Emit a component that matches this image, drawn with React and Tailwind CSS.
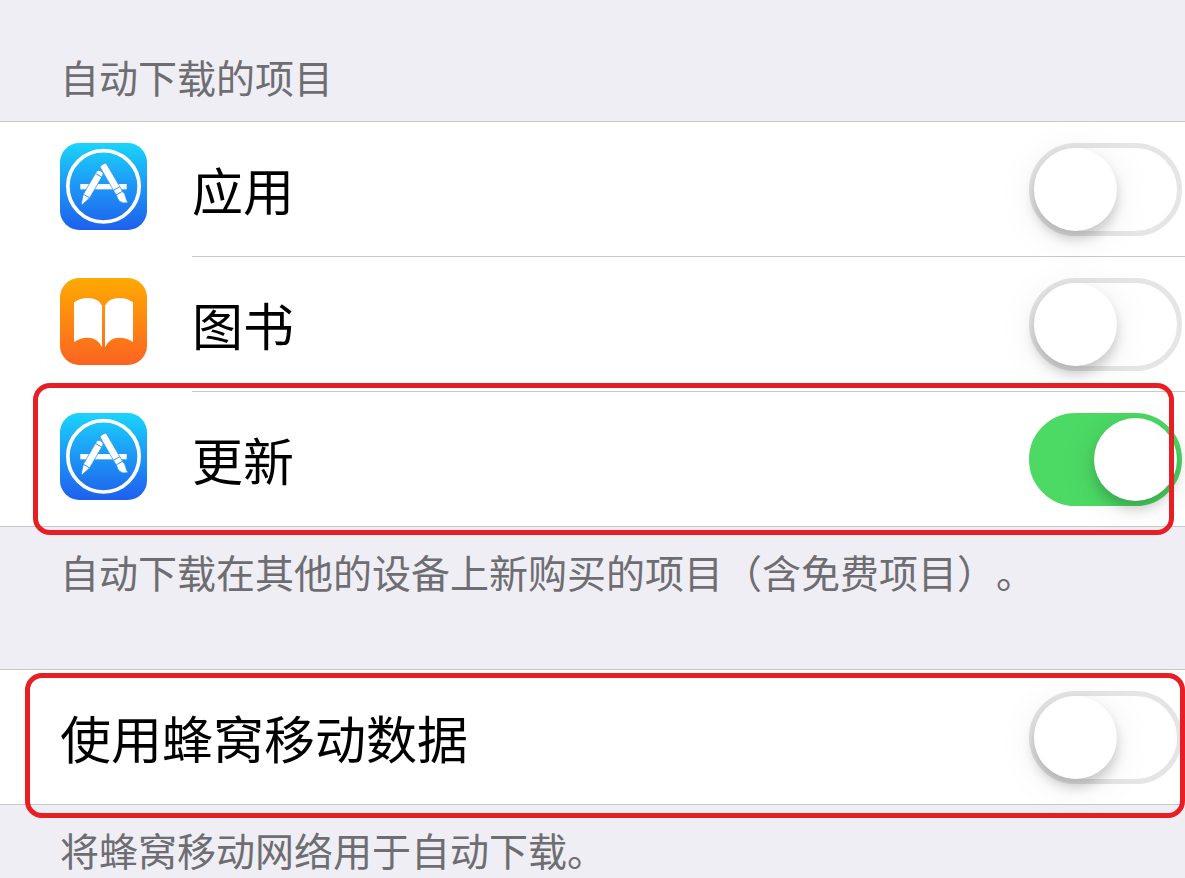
import { useState } from "react";

const ITEMS = [
  { id: "apps", label: "应用", icon: AppStoreIcon },
  { id: "books", label: "图书", icon: BooksIcon },
  { id: "updates", label: "更新", icon: AppStoreIcon, marked: true },
];

function AppStoreIcon() {
  return (
    <svg viewBox="30 24 261 261" className="w-[87px] h-[87px] shrink-0" aria-hidden="true">
      <defs>
        <linearGradient id="store" x1="0" y1="0" x2="0" y2="1">
          <stop offset="0" stopColor="#1ad5fb" />
          <stop offset="0.45" stopColor="#1d9cf6" />
          <stop offset="1" stopColor="#1e5fee" />
        </linearGradient>
      </defs>
      <rect x="30" y="24" width="261" height="261" rx="58" fill="url(#store)" />
      <circle cx="160.500" cy="154" r="107" fill="none" stroke="#fff" strokeWidth="11" />
      <rect x="91" y="147" width="139" height="16" fill="#fff" />
      <g transform="translate(153 108) rotate(30)" fill="#fff" stroke="#1f8ff5" strokeWidth="2">
        <path d="M-11 15V9Q-11 0 0 0Q11 0 11 9V15Z" />
        <path d="M-11 15H11V87H-11Z" />
        <path d="M-11 87H11L2 115H-2Z" />
      </g>
      <g transform="translate(158 88) rotate(-30)" fill="#fff" stroke="#1f8ff5" strokeWidth="2">
        <path d="M-11 84V6Q-11 0 -5 0H5Q11 0 11 6V84Z" />
        <path d="M-11 84H11V100H-11Z" />
        <path d="M-10 100H10Q15 109 11 119Q7 128 9 137Q-8 134 -12 120Q-14 110 -10 100Z" />
      </g>
    </svg>
  );
}

function BooksIcon() {
  return (
    <svg viewBox="30 24 261 261" className="w-[87px] h-[87px] shrink-0" aria-hidden="true">
      <defs>
        <linearGradient id="books" x1="0" y1="0" x2="0" y2="1">
          <stop offset="0" stopColor="#ffaa03" />
          <stop offset="1" stopColor="#fb6321" />
        </linearGradient>
      </defs>
      <rect x="30" y="24" width="261" height="261" rx="58" fill="url(#books)" />
      <path
        d="M72 97Q90 84 113 84Q146 84 156 107V232Q144 203 113 203Q91 203 72 216Z"
        fill="#fff"
      />
      <path
        d="M249 97Q231 84 208 84Q175 84 165 107V232Q177 203 208 203Q230 203 249 216Z"
        fill="#fff"
      />
    </svg>
  );
}

function Switch({ id, checked, onChange }) {
  return (
    <input
      id={id}
      type="checkbox"
      role="switch"
      checked={checked}
      onChange={onChange}
      className="appearance-none shrink-0 w-[153px] h-[93px] mr-[3px] rounded-full border-5 border-[#e5e5e5] bg-white checked:border-[#4cd964] checked:bg-[#4cd964] cursor-pointer transition-colors before:block before:size-[83px] before:rounded-full before:bg-white before:shadow-[0_8px_12px_rgba(0,0,0,0.18),0_6px_40px_rgba(0,0,0,0.08)] before:transition-transform checked:before:translate-x-15"
    />
  );
}

export default function App() {
  const [enabled, setEnabled] = useState({
    apps: false,
    books: false,
    updates: true,
    cellular: false,
  });

  const toggle = (id) => setEnabled((prev) => ({ ...prev, [id]: !prev[id] }));

  return (
    <main
      lang="zh-CN"
      className="min-h-screen overflow-hidden bg-[#efeef4] text-black [text-spacing-trim:space-all]"
      style={{ fontFamily: '"Noto Sans CJK SC", sans-serif' }}
    >
      <h2 className="h-[121px] pt-12 pl-15 text-[39px] leading-[56px] font-normal text-[#6d6d72]">
        自动下载的项目
      </h2>

      <ul className="bg-white border-y border-[#c8c7cc]">
        {ITEMS.map(({ id, label, icon: Icon, marked }) => (
          <li key={id} className="group relative flex pl-15">
            <div className="pt-[21px] pr-[45px]">
              <Icon />
            </div>
            <div className="flex flex-1 justify-between pt-[21px] pb-5 border-b border-[#c8c7cc] group-last:border-b-0">
              <label htmlFor={id} className="text-[51px] leading-[93px] font-normal">
                {label}
              </label>
              <Switch id={id} checked={enabled[id]} onChange={() => toggle(id)} />
            </div>
            {marked && (
              <div className="absolute -top-[9px] -bottom-[9px] left-[33px] right-[11px] z-10 rounded-[17px] border-5 border-[#e81e25] pointer-events-none" />
            )}
          </li>
        ))}
      </ul>
      <p className="h-[142px] pt-4 pl-15 text-[39px] leading-[56px] text-[#6d6d72]">
        自动下载在其他的设备上新购买的项目（含免费项目）。
      </p>

      <div className="relative flex justify-between pt-[21px] pb-5 pl-15 bg-white border-y border-[#c8c7cc]">
        <label htmlFor="cellular" className="text-[51px] leading-[93px] font-normal">
          使用蜂窝移动数据
        </label>
        <Switch
          id="cellular"
          checked={enabled.cellular}
          onChange={() => toggle("cellular")}
        />
        <div className="absolute top-[3px] -bottom-[14px] left-[25px] right-0 z-10 rounded-[17px] border-5 border-[#e81e25] pointer-events-none" />
      </div>
      <p className="pt-4 pl-15 text-[39px] leading-[56px] text-[#6d6d72]">
        将蜂窝移动网络用于自动下载。
      </p>
    </main>
  );
}
